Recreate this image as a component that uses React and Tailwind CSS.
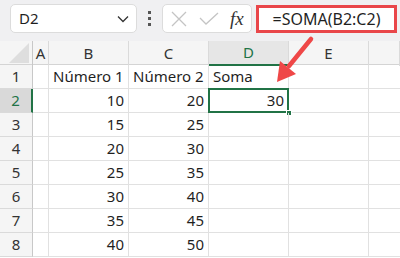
import React from 'react';

const rows = [
  ['Número 1', 'Número 2', 'Soma'],
  [10, 20, 30],
  [15, 25, ''],
  [20, 30, ''],
  [25, 35, ''],
  [30, 40, ''],
  [35, 45, ''],
  [40, 50, ''],
];

const cols = ['A', 'B', 'C', 'D', 'E', ''];

const gridCols = 'grid grid-cols-[33px_16px_80px_80px_80px_80px_1fr]';

export default function App() {
  return (
    <div
      className="relative w-[400px] h-[258px] overflow-hidden bg-white text-[#1f1f1f]"
      style={{ fontFamily: '"Noto Sans", "Open Sans", sans-serif' }}
    >
      {/* formula bar */}
      <div className="flex items-center h-[41px] bg-[#f0f0f2] pl-[10px] pr-[3px] pb-[4px]">
        <div className="flex items-center justify-between w-[127px] h-[29px] bg-white border border-[#dcdcdc] rounded-[5px] pl-[8px] pr-[7px]">
          <span className="text-[15px]">D2</span>
          <svg width="12" height="8" viewBox="0 0 12 8">
            <path d="M1 1.5 L6 6.5 L11 1.5" fill="none" stroke="#333" strokeWidth="1.3" />
          </svg>
        </div>
        <div className="flex flex-col gap-[3px] mx-[11px]">
          <span className="w-[3px] h-[3px] bg-[#555]" />
          <span className="w-[3px] h-[3px] bg-[#555]" />
          <span className="w-[3px] h-[3px] bg-[#555]" />
        </div>
        <div className="flex items-center w-[90px] h-[29px] bg-white border border-[#dcdcdc] rounded-[5px] pl-[8px]">
          <svg width="16" height="16" viewBox="0 0 16 16">
            <path d="M1 1 L15 15 M15 1 L1 15" stroke="#c4c4c4" strokeWidth="1.3" />
          </svg>
          <svg width="20" height="14" viewBox="0 0 20 14" className="ml-[12px]">
            <path d="M1 6 L7 12 L19 1" fill="none" stroke="#c4c4c4" strokeWidth="1.3" />
          </svg>
          <span
            className="ml-[11px] text-[19px] italic leading-none text-[#333]"
            style={{ fontFamily: '"Liberation Serif", serif' }}
          >
            fx
          </span>
        </div>
        <div className="flex items-center justify-center ml-[4px] flex-1 h-[28px] bg-white border-[3px] border-[#e9464a]">
          <span className="text-[16px]">=SOMA(B2:C2)</span>
        </div>
      </div>

      {/* grid header */}
      <div className={`${gridCols} h-[24px] bg-[#f5f5f5] text-[15px] text-[#333] border-b border-[#d4d4d4]`}>
        <div className="relative border-r border-[#c8c8c8]">
          <svg width="20" height="20" viewBox="0 0 20 20" className="absolute right-[3px] bottom-[3px]">
            <path d="M20 0 L20 20 L0 20 Z" fill="#dedede" />
          </svg>
        </div>
        {cols.map((c) => (
          <div
            key={c || 'f'}
            className={`flex items-center justify-center border-r border-[#dadada] ${
              c === 'D' ? 'bg-[#e6e6e6] text-[#217346] border-b-2 border-b-[#217346]' : ''
            }`}
          >
            {c}
          </div>
        ))}
      </div>

      {/* rows */}
      {rows.map((r, i) => (
        <div key={i} className={`${gridCols} h-[24px] text-[15px]`}>
          <div
            className={`flex items-center justify-center border-b border-[#dadada] text-[#333] ${
              i === 1
                ? 'bg-[#d9d9d9] border-r-2 border-r-[#217346] text-[#217346]'
                : 'bg-[#f5f5f5] border-r border-r-[#c8c8c8]'
            }`}
          >
            {i + 1}
          </div>
          <div className="border-r border-b border-[#e1e1e1]" />
          {r.map((v, j) => (
            <div
              key={j}
              className={`relative flex items-center px-[4px] border-r border-b border-[#e1e1e1] ${
                typeof v === 'number' ? 'justify-end' : 'justify-start'
              }`}
            >
              {v}
              {i === 1 && j === 2 && (
                <>
                  <div className="absolute -left-[1px] -top-[1px] right-[-1px] bottom-[-1px] border-2 border-[#217346]" />
                  <div className="absolute right-[-4px] bottom-[-4px] w-[6px] h-[6px] bg-[#217346] border border-white" />
                </>
              )}
            </div>
          ))}
          <div className="border-r border-b border-[#e1e1e1]" />
          <div className="border-b border-[#e1e1e1]" />
        </div>
      ))}

      {/* arrow */}
      <svg className="absolute left-0 top-0 pointer-events-none" width="400" height="258">
        <path d="M311 39 L289 66" stroke="#ef4747" strokeWidth="4.5" strokeLinecap="round" />
        <polygon points="277,82 280,61 296,74" fill="#ef4747" />
      </svg>
    </div>
  );
}
